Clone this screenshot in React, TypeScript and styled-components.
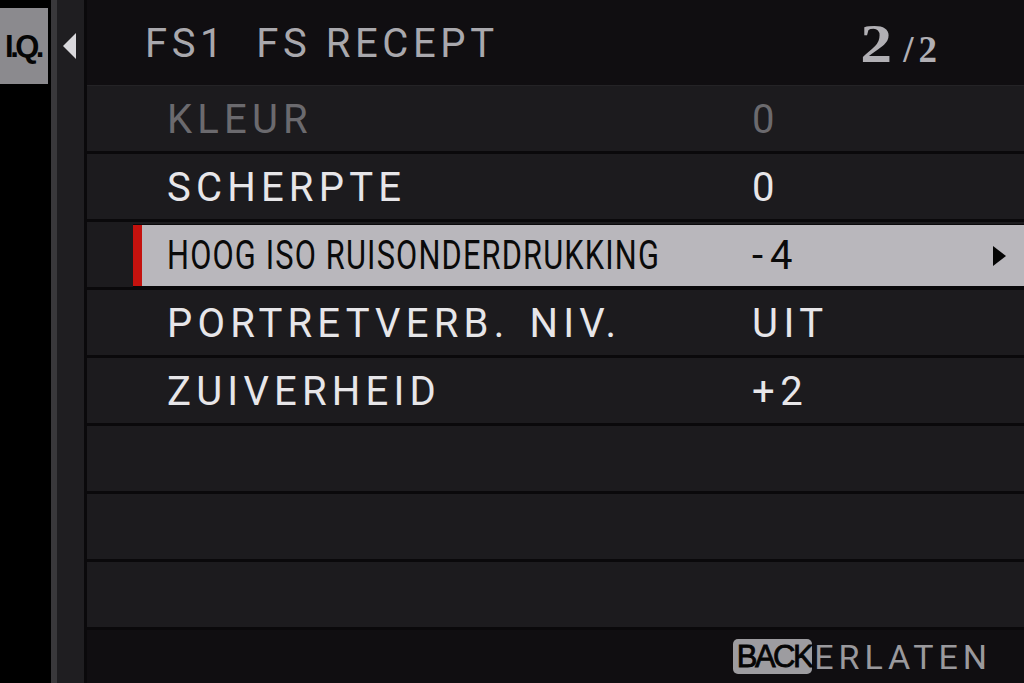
import React from 'react';
import styled, { createGlobalStyle } from 'styled-components';

const GlobalStyle = createGlobalStyle`
  html, body {
    margin: 0;
    padding: 0;
    background: #000;
  }
  body {
    font-family: Roboto, "Liberation Sans", sans-serif;
  }
`;

type Item = { label: string; value: string; disabled?: boolean; selected?: boolean };

const items: Item[] = [
  { label: 'KLEUR', value: '0', disabled: true },
  { label: 'SCHERPTE', value: '0' },
  { label: 'HOOG ISO RUISONDERDRUKKING', value: '-4', selected: true },
  { label: 'PORTRETVERB. NIV.', value: 'UIT' },
  { label: 'ZUIVERHEID', value: '+2' },
  { label: '', value: '' },
  { label: '', value: '' },
  { label: '', value: '' },
];

export default function App() {
  return (
    <>
      <GlobalStyle />
      <Screen>
        <Sidebar>
          <TabBadge>I.Q.</TabBadge>
        </Sidebar>
        <Stripe />
        <NavColumn>
          <svg width="14" height="26" viewBox="0 0 14 26">
            <polygon points="13,0 13,26 0,13" fill="#d9d8dc" />
          </svg>
        </NavColumn>
        <Divider />
        <Main>
          <Header>
            <Title>FS1&nbsp;&nbsp;FS RECEPT</Title>
            <PageNo>
              <Big>2</Big>
              <Small>/2</Small>
            </PageNo>
          </Header>
          {items.map((it, i) => (
            <Slot key={i}>
              {it.selected ? (
                <SelectedBar>
                  <Marker />
                  <CondensedLabel>
                    <span>{it.label}</span>
                  </CondensedLabel>
                  <SelectedValue>{it.value}</SelectedValue>
                  <Arrow>
                    <svg width="13" height="20" viewBox="0 0 13 20">
                      <polygon points="0,0 13,10 0,20" fill="#050505" />
                    </svg>
                  </Arrow>
                </SelectedBar>
              ) : (
                <RowContent>
                  <Label disabled={it.disabled}>{it.label}</Label>
                  <Value disabled={it.disabled}>{it.value}</Value>
                </RowContent>
              )}
            </Slot>
          ))}
          <Footer>
            <BackBadge>BACK</BackBadge>
            <FooterText>ERLATEN</FooterText>
          </Footer>
        </Main>
      </Screen>
    </>
  );
}

const Screen = styled.div`
  display: flex;
  width: 1024px;
  height: 683px;
  background: #000;
  overflow: hidden;
`;

const Sidebar = styled.div`
  width: 51px;
  flex-shrink: 0;
  background: #000;
  padding-top: 8px;
`;

const TabBadge = styled.div`
  width: 48px;
  height: 76px;
  background: #8b8a8e;
  color: #050505;
  display: flex;
  align-items: center;
  justify-content: center;
  font-family: "Liberation Sans", Arial, sans-serif;
  font-weight: 700;
  font-size: 31px;
  letter-spacing: -3.5px;
  padding-right: 2px;
  padding-top: 2px;
  box-sizing: border-box;
  overflow: hidden;
`;

const Stripe = styled.div`
  width: 6px;
  flex-shrink: 0;
  background: #39383b;
`;

const NavColumn = styled.div`
  width: 27px;
  flex-shrink: 0;
  background: #1f1e21;
  display: flex;
  justify-content: center;
  align-items: flex-start;
  padding-top: 33px;
  box-sizing: border-box;
  padding-right: 2px;
`;

const Divider = styled.div`
  width: 3px;
  flex-shrink: 0;
  background: #0a090b;
`;

const Main = styled.div`
  flex: 1;
  display: flex;
  flex-direction: column;
  min-width: 0;
`;

const Header = styled.div`
  height: 86px;
  flex-shrink: 0;
  background: #100e11;
  border-bottom: 1px solid #242326;
  box-sizing: border-box;
  display: flex;
  align-items: center;
  padding-left: 58px;
  padding-right: 82px;
`;

const Title = styled.div`
  flex: 1;
  color: #a9a8ad;
  font-size: 40px;
  letter-spacing: 4.6px;
  line-height: 1;
  padding-top: 2px;
`;

const PageNo = styled.div`
  display: flex;
  align-items: baseline;
  color: #b1afb4;
  font-family: "Liberation Serif", "Times New Roman", serif;
  font-weight: 700;
  line-height: 1;
  padding-top: 2px;
`;

const Big = styled.span`
  display: inline-block;
  font-size: 54px;
  transform: scaleX(1.18);
  transform-origin: right center;
`;

const Small = styled.span`
  font-size: 37px;
  margin-left: 11px;
  letter-spacing: 5px;
`;

const Slot = styled.div`
  height: 68px;
  flex-shrink: 0;
  background: #1c1b1e;
  border-bottom: 3px solid #0a090b;
  box-sizing: border-box;
  display: flex;
  align-items: stretch;
`;

const RowContent = styled.div`
  flex: 1;
  display: flex;
  align-items: center;
  padding-left: 80px;
  padding-top: 2px;
`;

const Label = styled.div<{ disabled?: boolean }>`
  width: 585px;
  font-size: 40px;
  letter-spacing: 5.2px;
  word-spacing: 5px;
  line-height: 1;
  color: ${({ disabled }) => (disabled ? '#6b6a6e' : '#e7e6e9')};
`;

const Value = styled.div<{ disabled?: boolean }>`
  font-size: 40px;
  letter-spacing: 5.5px;
  line-height: 1;
  color: ${({ disabled }) => (disabled ? '#6b6a6e' : '#e7e6e9')};
`;

const SelectedBar = styled.div`
  flex: 1;
  margin: 3px 0 1px 46px;
  background: #b9b7bc;
  box-shadow: 0 -1px 0 #0a090b, 0 1px 0 #0a090b;
  display: flex;
  align-items: center;
`;

const Marker = styled.div`
  width: 9px;
  align-self: stretch;
  background: #c4120e;
`;

const CondensedLabel = styled.div`
  width: 610px;
  padding-left: 25px;
  box-sizing: border-box;
  font-size: 40px;
  line-height: 1;
  color: #0a0a0a;
  white-space: nowrap;

  span {
    display: inline-block;
    transform: scaleX(0.77);
    transform-origin: left center;
    letter-spacing: 1.5px;
  }
`;

const SelectedValue = styled.div`
  flex: 1;
  font-size: 40px;
  letter-spacing: 7px;
  line-height: 1;
  color: #0a0a0a;
`;

const Arrow = styled.div`
  width: 13px;
  padding-right: 18px;
  display: flex;
  align-items: center;
`;

const Footer = styled.div`
  flex: 1;
  background: #100e11;
  display: flex;
  align-items: center;
  justify-content: flex-end;
  padding-right: 32px;
`;

const BackBadge = styled.div`
  height: 35px;
  padding: 0 1px 0 4px;
  background: #9d9ca0;
  border-radius: 5px;
  color: #050505;
  display: flex;
  align-items: center;
  font-family: "Liberation Sans", Arial, sans-serif;
  font-size: 31px;
  font-weight: 400;
  letter-spacing: -2.5px;
  line-height: 1;
  -webkit-text-stroke: 0.8px #050505;
  margin-right: 2px;
`;

const FooterText = styled.div`
  color: #9a999d;
  font-size: 34px;
  letter-spacing: 5px;
  line-height: 1;
`;
